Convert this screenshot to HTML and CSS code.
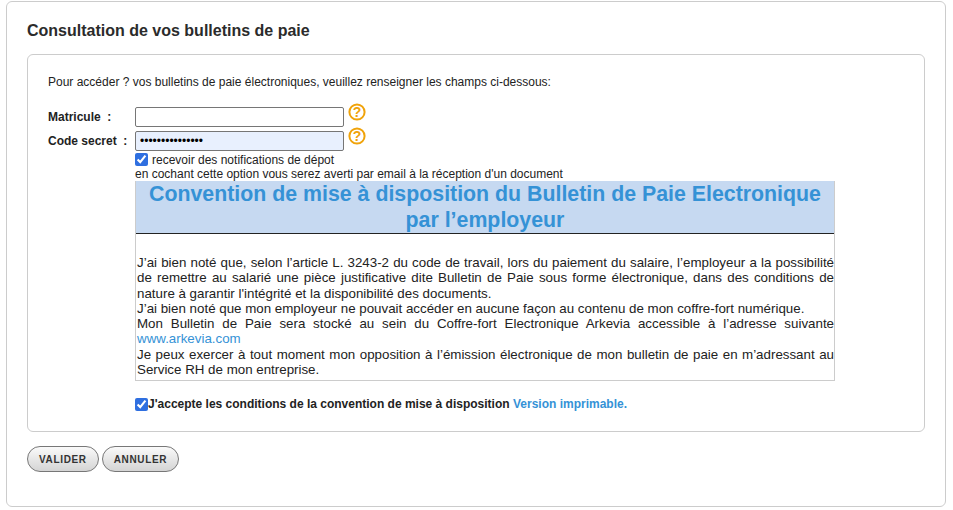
FILE: index.html
```html
<!DOCTYPE html>
<html>
<head>
    <title>Consultation de vos bulletins de paie</title>
    <meta name="viewport" content="width=device-width, initial-scale=1">
    <link rel="stylesheet" href="styles.css">
</head>
<body>
    <div class="page">
        <h1>Consultation de vos bulletins de paie</h1>
        <form class="panel" onsubmit="return false">
            <p class="intro">Pour accéder ? vos bulletins de paie électroniques, veuillez renseigner les champs ci-dessous:</p>

            <div class="field">
                <label for="matricule">Matricule&nbsp; :</label>
                <input type="text" id="matricule">
                <svg class="help" width="18" height="18" viewBox="0 0 18 18">
                    <circle cx="9" cy="9" r="7.6" fill="#fff" stroke="#f0a30a" stroke-width="2"/>
                    <text x="9" y="14" text-anchor="middle" class="help-mark">?</text>
                </svg>
            </div>
            <div class="field field-last">
                <label for="secret">Code secret&nbsp; :</label>
                <input type="password" id="secret" class="filled" value="123456789012345">
                <svg class="help" width="18" height="18" viewBox="0 0 18 18">
                    <circle cx="9" cy="9" r="7.6" fill="#fff" stroke="#f0a30a" stroke-width="2"/>
                    <text x="9" y="14" text-anchor="middle" class="help-mark">?</text>
                </svg>
            </div>

            <div class="indent">
                <div class="notif">
                    <input type="checkbox" checked>
                    <span>recevoir des notifications de dépot</span>
                </div>
                <div class="notif-help">en cochant cette option vous serez averti par email à la réception d'un document</div>

                <div class="convention">
                    <h2>Convention de mise à disposition du Bulletin de Paie Electronique<br>par l’employeur</h2>
                    <div class="convention-text">
                        <p>J’ai bien noté que, selon l’article L. 3243-2 du code de travail, lors du paiement du salaire, l’employeur a la possibilité de remettre au salarié une pièce justificative dite Bulletin de Paie sous forme électronique, dans des conditions de nature à garantir l'intégrité et la disponibilité des documents.</p>
                        <p>J’ai bien noté que mon employeur ne pouvait accéder en aucune façon au contenu de mon coffre-fort numérique.</p>
                        <p>Mon Bulletin de Paie sera stocké au sein du Coffre-fort Electronique Arkevia accessible à l’adresse suivante <a href="#">www.arkevia.com</a></p>
                        <p>Je peux exercer à tout moment mon opposition à l’émission électronique de mon bulletin de paie en m’adressant au Service RH de mon entreprise.</p>
                    </div>
                </div>

                <div class="accept">
                    <input type="checkbox" checked>
                    <span>J'accepte les conditions de la convention de mise à disposition <a href="#">Version imprimable.</a></span>
                </div>
            </div>
        </form>
        <div class="actions">
            <button type="button">VALIDER</button>
            <button type="button">ANNULER</button>
        </div>
    </div>
</body>
</html>
```

FILE: styles.css
```css
body { margin: 1px 7px 0 6px; font-family: "Liberation Sans", Arial, sans-serif; font-size: 12px; color: #222; background: #fff; }
a { color: #3592d6; text-decoration: none; }

.page { height: 506px; box-sizing: border-box; border: 1px solid #ccc; border-radius: 6px; padding: 19px 20px 0 20px; }
h1 { margin: 0 0 14px 0; font-size: 16px; line-height: 19px; font-weight: bold; color: #2b2b2b; }

.panel { height: 378px; box-sizing: border-box; border: 1px solid #ccc; border-radius: 6px; padding: 20px 20px 0 20px; }
.intro { margin: 0 0 17px 0; line-height: 15px; }

.field { display: flex; align-items: flex-start; height: 24px; }
.field-last { height: 21px; }
.field label { width: 87px; font-weight: bold; line-height: 20px; }
.field input { width: 209px; height: 20px; box-sizing: border-box; margin: 0; padding: 1px 4px; border: 1px solid #767676; border-radius: 2px; font-size: 12px; font-family: "Liberation Sans", Arial, sans-serif; background: #fff; }
.field input.filled { background: #e8f0fe; }
.help { margin: -4px 0 0 4px; }
.help-mark { font-size: 14px; font-weight: bold; fill: #f0a30a; font-family: "Liberation Sans", Arial, sans-serif; }

.indent { margin-left: 87px; width: 700px; }
.notif { display: flex; align-items: center; height: 15px; }
.notif input, .accept input { width: 13px; height: 13px; margin: 0; accent-color: #2f6fe0; flex: none; }
.notif span { margin-left: 4px; }
.notif-help { line-height: 14px; height: 14px; }

.convention { border: 1px solid #ccc; border-top: 0; height: 200px; box-sizing: border-box; }
.convention h2 { margin: 0; background: #c6d9f1; border-bottom: 1px solid #222; color: #3592d6; font-size: 21.33px; line-height: 26px; text-align: center; }
.convention-text { padding: 21px 0 0 1px; font-size: 13.33px; line-height: 15.3px; text-align: justify; }
.convention-text p { margin: 0; }

.accept { display: flex; align-items: center; margin-top: 16px; font-weight: bold; }

.actions { display: flex; gap: 3px; margin-top: 14px; }
.actions button { height: 26px; padding: 0 11px; border: 1px solid #777; border-radius: 13px; background: linear-gradient(#fafafa, #d4d4d4); font-family: "Liberation Sans", Arial, sans-serif; font-size: 10px; font-weight: bold; color: #333; letter-spacing: 0.65px; }
```
